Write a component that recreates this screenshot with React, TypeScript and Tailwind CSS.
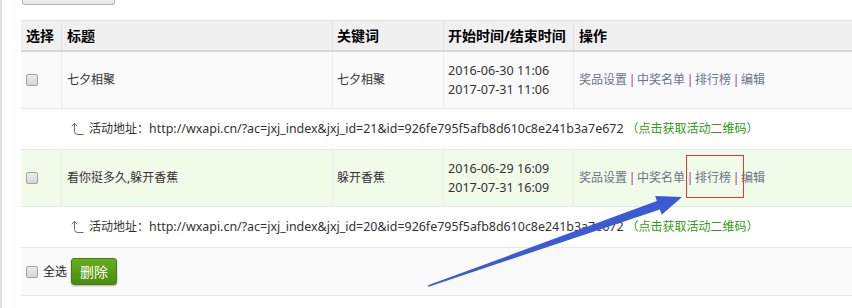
import React from 'react'

type Row = {
  title: string
  keyword: string
  start: string
  end: string
  jxjId: number
  tint: string
}

const ROWS: Row[] = [
  { title: '七夕相聚', keyword: '七夕相聚', start: '2016-06-30 11:06', end: '2017-07-31 11:06', jxjId: 21, tint: 'bg-[#fafafa]' },
  { title: '看你挺多久,躲开香蕉', keyword: '躲开香蕉', start: '2016-06-29 16:09', end: '2017-07-31 16:09', jxjId: 20, tint: 'bg-[#f1fbea]' },
]

const OPS = ['奖品设置', '中奖名单', '排行榜', '编辑']

function Checkbox() {
  return (
    <span className="block w-3 h-3 shrink-0 rounded-[2px] border border-[#a3a3a3] bg-gradient-to-b from-[#ececec] to-[#d6d6d6]" />
  )
}

function UpTurnArrow() {
  return (
    <svg width="13" height="14" viewBox="0 0 13 14" className="shrink-0">
      <path d="M3.5 1.5 V9.5 Q3.5 12.5 6.5 12.5 H12.5" fill="none" stroke="#666" strokeWidth="1" />
      <path d="M0.8 4.2 L3.5 1.3 L6.2 4.2" fill="none" stroke="#666" strokeWidth="1" />
    </svg>
  )
}

export default function App() {
  return (
    <div
      className="relative w-[852px] h-[308px] overflow-hidden bg-white border-l-2 border-[#dde1e6] text-[#333]"
      style={{ fontFamily: '"Noto Sans", "Noto Sans CJK SC", sans-serif' }}
    >
      {/* ── top toolbar button (mostly scrolled off) ───────────── */}
      <div className="flex items-start h-5 pl-5">
        <div className="w-[93px] h-[5px] rounded-b-[3px] border border-t-0 border-[#b5b5b5] bg-[#ececec]" />
      </div>

      {/* ── table ──────────────────────────────────────────────── */}
      <div className="ml-[19px] text-xs">
        {/* header */}
        <div className="flex h-[32px] bg-[#f0f0f0] border-t border-b-2 border-t-[#e3e3e3] border-b-[#d6d6d6] text-sm font-bold text-black">
          <div className="w-10 pl-[5px] flex items-center">选择</div>
          <div className="w-[271px] pl-[5px] flex items-center border-l border-[#e2e2e2]">标题</div>
          <div className="w-[111px] pl-[4px] flex items-center border-l border-[#e2e2e2]">关键词</div>
          <div className="w-[130px] pl-[4px] flex items-center border-l border-[#e2e2e2]">开始时间/结束时间</div>
          <div className="flex-1 pl-[5px] flex items-center border-l border-[#e2e2e2]">操作</div>
        </div>

        {ROWS.map((r) => (
          <React.Fragment key={r.jxjId}>
            <div className={`flex h-[57px] border-b border-[#e8e8e8] ${r.tint}`}>
              <div className="w-10 pl-[5px] flex items-center"><Checkbox /></div>
              <div className="w-[271px] pl-[5px] flex items-center border-l border-[#ececec]">{r.title}</div>
              <div className="w-[111px] pl-[4px] flex items-center border-l border-[#ececec]">{r.keyword}</div>
              <div className="w-[130px] pl-[4px] flex flex-col justify-center leading-[19px] text-[12.6px] border-l border-[#ececec]">
                <span>{r.start}</span>
                <span>{r.end}</span>
              </div>
              <div className="flex-1 pl-[5px] flex items-center border-l border-[#ececec] text-[#6a7486]">
                {OPS.map((op, i) => (
                  <React.Fragment key={op}>
                    {i > 0 && <span className="inline-block w-[10px] text-center text-[#8d3b8d]">|</span>}
                    <span>{op}</span>
                  </React.Fragment>
                ))}
              </div>
            </div>

            {/* activity link row */}
            <div className="flex items-center h-[41px] border-b border-[#e8e8e8] bg-white pl-[50px]">
              <UpTurnArrow />
              <span className="ml-[5px]">活动地址：</span>
              <span className="text-[12.45px]">
                http://wxapi.cn/?ac=jxj_index&amp;jxj_id={r.jxjId}&amp;id=926fe795f5afb8d610c8e241b3a7e672
              </span>
              <span className="ml-[3px] text-[#2f9a12]">（点击获取活动二维码）</span>
            </div>
          </React.Fragment>
        ))}

        {/* footer */}
        <div className="flex items-center h-[48px] pl-[5px] bg-[#fafafa] border-b border-[#e8e8e8]">
          <Checkbox />
          <span className="ml-[5px] text-xs text-[#222]">全选</span>
          <button className="ml-[4px] w-[46px] h-[27px] rounded-[3px] border border-[#437f0e] bg-gradient-to-b from-[#66ad20] to-[#4a8b0d] text-white text-sm shadow-[0_1px_2px_rgba(0,0,0,0.3)]">
            删除
          </button>
        </div>
      </div>

      {/* ── annotation: red highlight box ──────────────────────── */}
      <div className="absolute left-[684px] top-[155px] w-[58px] h-[43px] border border-[#e23a3a]" />

      {/* ── annotation: blue arrow ─────────────────────────────── */}
      <svg className="absolute -left-[2px] top-0 pointer-events-none" width="852" height="308" viewBox="0 0 852 308">
        <polygon
          points="428,285.3 656.9,201.1 655.1,195.9 682,197 661.7,214.7 659.9,209.5 428.6,286.7"
          fill="#3a5ad6"
        />
      </svg>
    </div>
  )
}
